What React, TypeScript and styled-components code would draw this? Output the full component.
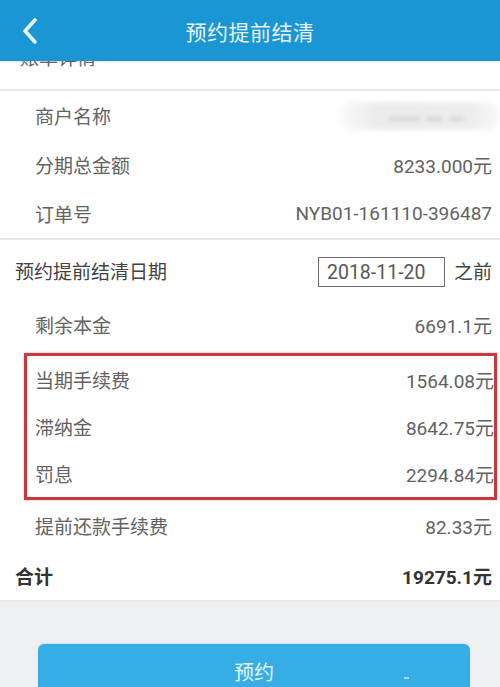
import React from 'react';
import styled, { createGlobalStyle } from 'styled-components';

const GlobalStyle = createGlobalStyle`
  html, body {
    margin: 0;
    padding: 0;
    background: #eef0f2;
  }
  body {
    font-family: Roboto, "Noto Sans CJK SC", sans-serif;
  }
`;

const Page = styled.div`
  width: 500px;
  height: 687px;
  overflow: hidden;
  display: flex;
  flex-direction: column;
  background: #eef0f2;
`;

const Header = styled.header`
  flex: 0 0 61px;
  display: grid;
  grid-template-columns: 60px 1fr 60px;
  align-items: center;
  background: #1b96d5;
  position: relative;
  z-index: 1;
  box-shadow: 0 1px 1px rgba(0, 0, 0, 0.08);
`;

const BackButton = styled.button`
  border: none;
  background: none;
  padding: 0 0 0 20px;
  height: 100%;
  display: flex;
  align-items: center;
  cursor: pointer;
`;

const Title = styled.h1`
  margin: 0;
  text-align: center;
  font-size: 21px;
  font-weight: 400;
  color: #e6f5fd;
  letter-spacing: 0.5px;
`;

const Section = styled.section`
  background: #fff;
  border-bottom: 2px solid #e8e9ea;
`;

// list is scrolled: the top row hides under the header, only its lower edge shows
const ClippedRow = styled.div`
  height: 28px;
  overflow: hidden;
  padding-left: 20px;
  font-size: 19px;
  color: #666;
  line-height: 19px;
  & > span {
    display: block;
    margin-top: -12px;
  }
`;

const Row = styled.div<{ $indent?: boolean; $height?: number; $strong?: boolean }>`
  height: ${(p) => p.$height ?? 49}px;
  display: flex;
  align-items: center;
  justify-content: space-between;
  padding: 0 8px 0 ${(p) => (p.$indent ? 35 : 15)}px;
  font-size: 19px;
  color: ${(p) => (p.$strong ? '#333' : '#626262')};
  font-weight: ${(p) => (p.$strong ? 700 : 400)};
`;

const Label = styled.span<{ $dark?: boolean }>`
  color: ${(p) => (p.$dark ? '#424242' : 'inherit')};
`;

const Value = styled.span`
  color: inherit;
`;

const Blurred = styled.span`
  display: inline-block;
  width: 158px;
  height: 28px;
  margin-right: -6px;
  border-radius: 12px;
  background: linear-gradient(90deg, rgba(232, 232, 232, 0.2), #ebebeb 25%, #eeeeee 85%, rgba(238, 238, 238, 0.4));
  filter: blur(2.5px);
  position: relative;
  &::after {
    content: '';
    position: absolute;
    left: 50px;
    right: 34px;
    top: 16px;
    height: 2px;
    background: linear-gradient(90deg, #aaa 0 40%, transparent 40% 48%, #999 48% 70%, transparent 70% 80%, #aaa 80%);
    opacity: 0.7;
  }
`;

const DateGroup = styled.div`
  display: flex;
  align-items: center;
  gap: 9px;
`;

const DateBox = styled.div`
  width: 117px;
  height: 28px;
  border: 1.5px solid #6d6d6d;
  box-sizing: content-box;
  font-size: 19.5px;
  color: #585858;
  display: flex;
  align-items: center;
  padding-left: 8px;
  margin-top: 4px;
`;

const Highlight = styled.div`
  margin: 4px 3px 0 24px;
  border: 3px solid #c63a3d;
  box-shadow: 0 0 2px rgba(198, 58, 61, 0.4);
  & > div {
    padding-left: 8px;
    padding-right: 0;
    height: 47px;
  }
`;

const Footer = styled.div`
  flex: 1;
  background: #eef0f2;
  padding: 42px 30px 0 38px;
`;

const PrimaryButton = styled.button`
  width: 432px;
  height: 60px;
  border: none;
  border-radius: 6px;
  background: #36aee5;
  color: #e2f5fd;
  font-family: Roboto, "Noto Sans CJK SC", sans-serif;
  font-size: 20px;
  display: flex;
  align-items: flex-start;
  justify-content: center;
  padding-top: 13px;
  position: relative;
  box-shadow: 0 -1px 2px rgba(120, 210, 240, 0.35);
  &::after {
    content: '';
    position: absolute;
    left: 366px;
    top: 33px;
    width: 5px;
    height: 2px;
    background: rgba(220, 240, 255, 0.7);
  }
`;

type Item = { label: string; value: string };

const orderRows: Item[] = [
  { label: '分期总金额', value: '8233.000元' },
  { label: '订单号', value: 'NYB01-161110-396487' },
];

const feeRows: Item[] = [
  { label: '当期手续费', value: '1564.08元' },
  { label: '滞纳金', value: '8642.75元' },
  { label: '罚息', value: '2294.84元' },
];

const Chevron = () => (
  <svg width="20" height="28" viewBox="0 0 20 28" fill="none">
    <path d="M15 3 L5 14 L15 25" stroke="#e8f6fd" strokeWidth="3.6" strokeLinecap="round" strokeLinejoin="round" />
  </svg>
);

export default function App() {
  return (
    <Page>
      <GlobalStyle />
      <Header>
        <BackButton aria-label="返回">
          <Chevron />
        </BackButton>
        <Title>预约提前结清</Title>
        <span />
      </Header>

      <Section>
        <ClippedRow>
          <span>账单详情</span>
        </ClippedRow>
      </Section>

      <Section>
        <Row $indent>
          <Label>商户名称</Label>
          <Blurred />
        </Row>
        {orderRows.map((r) => (
          <Row $indent key={r.label}>
            <Label>{r.label}</Label>
            <Value>{r.value}</Value>
          </Row>
        ))}
      </Section>

      <Section>
        <Row $height={60}>
          <Label $dark>预约提前结清日期</Label>
          <DateGroup>
            <DateBox>2018-11-20</DateBox>
            <Label $dark>之前</Label>
          </DateGroup>
        </Row>
        <Row $indent>
          <Label>剩余本金</Label>
          <Value>6691.1元</Value>
        </Row>
        <Highlight>
          {feeRows.map((r) => (
            <Row key={r.label}>
              <Label>{r.label}</Label>
              <Value>{r.value}</Value>
            </Row>
          ))}
        </Highlight>
        <Row $indent $height={50}>
          <Label>提前还款手续费</Label>
          <Value>82.33元</Value>
        </Row>
        <Row $strong $height={50}>
          <Label>合计</Label>
          <Value>19275.1元</Value>
        </Row>
      </Section>

      <Footer>
        <PrimaryButton>预约</PrimaryButton>
      </Footer>
    </Page>
  );
}
